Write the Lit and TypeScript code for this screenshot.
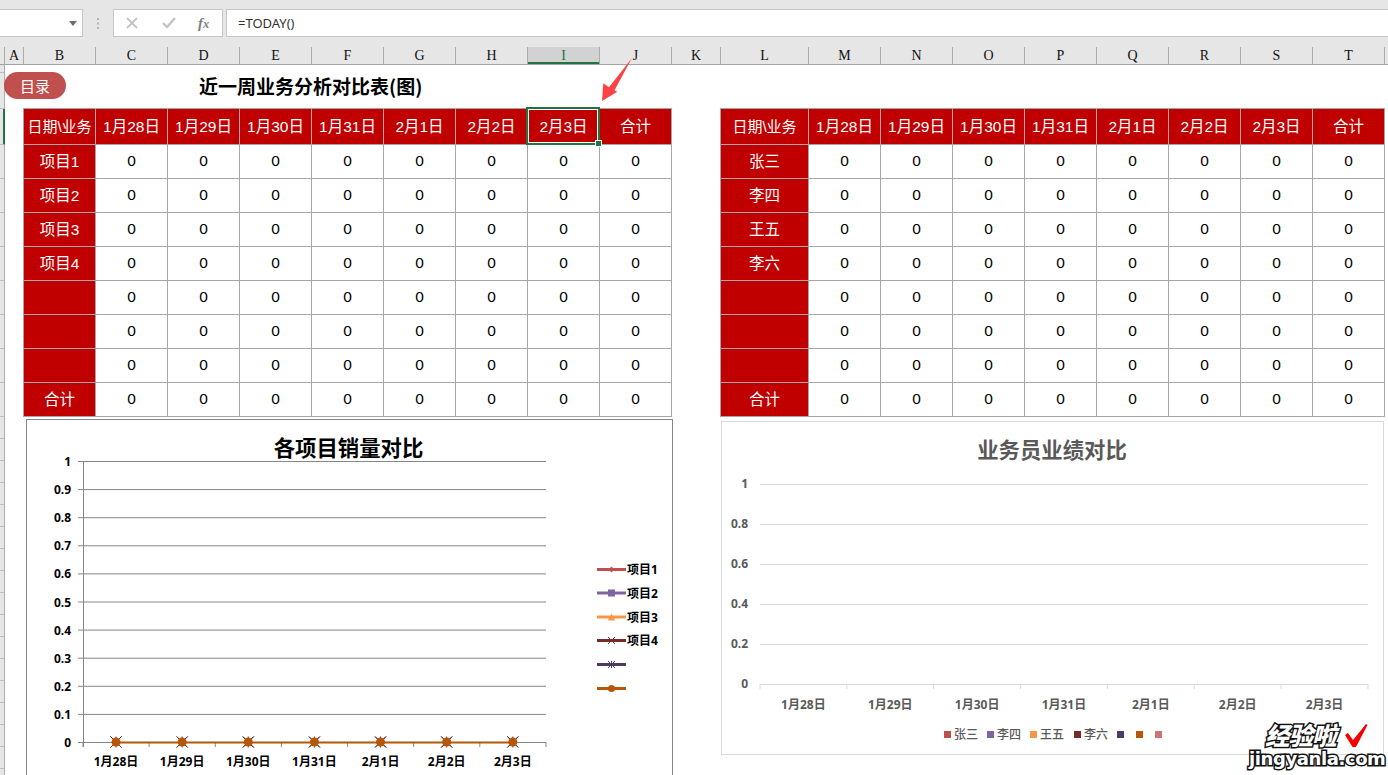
import { LitElement, html, svg, css } from "lit";
import { customElement } from "lit/decorators.js";

const dates = ["1月28日", "1月29日", "1月30日", "1月31日", "2月1日", "2月2日", "2月3日"];
const colLetters: [string, number][] = [
  ["A", 19], ["B", 72], ["C", 72], ["D", 72], ["E", 72], ["F", 72], ["G", 72], ["H", 72], ["I", 72], ["J", 72],
  ["K", 49], ["L", 88], ["M", 72], ["N", 72], ["O", 72], ["P", 72], ["Q", 72], ["R", 72], ["S", 72], ["T", 72],
];
const rowHeights = [8, 36, 36, ...Array(8).fill(34), ...Array(17).fill(22)];

const C1 = ["#c0504d", "#8064a2", "#f79646", "#772c2a", "#4d3b62", "#b65708"];
const C2 = ["#c0504d", "#8064a2", "#f79646", "#772c2a", "#4d3b62", "#b65708", "#cd7371"];

@customElement("app-root")
export class AppRoot extends LitElement {
  static styles = css`
    :host { display: block; width: 1388px; height: 775px; overflow: hidden; position: relative; background: #fff;
      font-family: "Liberation Sans", "Noto Sans CJK SC", sans-serif; }
    .formula { display: flex; height: 37px; box-sizing: border-box; padding-top: 9px; background: #e6e6e6; align-items: stretch; }
    .box { background: #fff; border: 1px solid #c6c6c6; box-sizing: border-box; display: flex; align-items: center; }
    .name { width: 83px; border-left: 0; justify-content: flex-end; padding-right: 5px; }
    .dots { width: 30px; display: flex; align-items: center; justify-content: center; }
    .tools { width: 110px; margin-right: 3px; padding-left: 12px; }
    .tools svg:first-child { margin-right: 24px; }
    .tools svg + svg { margin-right: 22px; }
    .fx { font-family: "Liberation Serif", serif; font-style: italic; font-weight: 700; font-size: 15px; color: #7f7f7f; }
    .input { flex: 1; border-right: 0; padding-left: 11px; font-family: "Noto Sans", sans-serif; font-size: 13px; color: #333; }

    .cols { display: flex; height: 28px; box-sizing: border-box; background: #e6e6e6; border-bottom: 1px solid #a3a3a3; align-items: flex-end; }
    .corner { width: 5px; height: 17px; box-sizing: border-box; border-right: 1px solid #ababab; flex: none; }
    .col { height: 17px; box-sizing: border-box; border-right: 1px solid #ababab; flex: none; display: flex; align-items: center; justify-content: center;
      font-family: "Liberation Serif", serif; font-size: 14px; color: #111; }
    .col.on { background: #d2d2d2; color: #217346; box-shadow: inset 0 -2px 0 #217346; }

    .sheet { display: flex; }
    .strip { width: 5px; flex: none; background: #e6e6e6; height: 710px; overflow: hidden; }
    .r { box-sizing: border-box; border-bottom: 1px solid #bdbdbd; border-right: 1px solid #ababab; }
    .r.on { border-right-color: #217346; box-shadow: inset -1px 0 0 #217346; }
    .main { flex: 1; min-width: 0; }

    .titleRow { height: 43px; display: flex; align-items: flex-start; }
    .btn { width: 62px; height: 27px; margin-top: 7px; margin-left: -1px; border-radius: 14px; background: #c0504d; color: #fff; font-size: 15px;
      display: flex; align-items: center; justify-content: center; font-family: "Noto Sans CJK SC", sans-serif; }
    .title { margin-left: 133px; margin-top: 7px; line-height: 28px; font-family: "Noto Sans CJK SC", sans-serif; font-weight: 700; font-size: 19px; color: #000; white-space: nowrap; }

    .tables { display: flex; padding-left: 18px; gap: 48px; }
    .grid { display: grid; border-top: 1px solid #a6a6a6; border-left: 1px solid #a6a6a6; grid-auto-rows: 34px; flex: none; }
    .a { grid-template-columns: repeat(9, 72px); grid-template-rows: 36px; }
    .b { grid-template-columns: 88px repeat(8, 72px); grid-template-rows: 36px; }
    .c { box-sizing: border-box; border-right: 1px solid #a6a6a6; border-bottom: 1px solid #a6a6a6; display: flex; align-items: center; justify-content: center;
      font-size: 15.5px; color: #000; font-family: "Liberation Sans", "Noto Sans CJK SC", sans-serif; position: relative; padding-bottom: 1px; white-space: nowrap; }
    .c.red { background: #c00000; color: #fff; padding-bottom: 3px; }
    .c.lead { font-size: 15px; }
    .sel { position: absolute; top: -2px; left: -2px; right: -1px; bottom: -1px; border: 2px solid #217346; box-shadow: inset 0 0 0 1px #fff; z-index: 1; }
    .handle { position: absolute; right: -3px; bottom: -3px; width: 5px; height: 5px; background: #217346; border: 1px solid #fff; z-index: 2; }

    .charts { display: flex; align-items: flex-start; padding-left: 21px; gap: 48px; padding-top: 2px; }
    .chart { display: block; flex: none; box-sizing: border-box; background: #fff; }
    .c1 { width: 647px; height: 360px; border: 1px solid #868686; }
    .c2 { width: 663px; height: 334px; border: 1px solid #d9d9d9; margin-top: 2px; }
    text { font-family: "Noto Sans CJK SC", sans-serif; }
    .t1 { font-size: 21.4px; font-weight: 700; fill: #000; text-anchor: middle; }
    .t2 { font-size: 21.4px; font-weight: 700; fill: #595959; text-anchor: middle; }
    .yl { font-family: "Noto Sans", sans-serif; font-size: 12px; font-weight: 700; fill: #000; text-anchor: end; }
    .xl { font-family: "Noto Sans", "Noto Sans CJK SC", sans-serif; font-size: 12px; font-weight: 700; fill: #000; text-anchor: middle; }
    .lg { font-family: "Noto Sans", "Noto Sans CJK SC", sans-serif; font-size: 12px; font-weight: 700; fill: #000; }
    .g { fill: #595959; }
    .lg2 { font-size: 12px; font-weight: 500; fill: #595959; }

    .arrow { position: absolute; left: 595px; top: 50px; }
    .wm { position: absolute; left: 1249px; top: 722px; width: 130px; height: 50px; }
    .wm1 { position: absolute; left: 16px; top: 0; font-family: "Noto Sans CJK SC", sans-serif; font-weight: 900; font-style: italic; font-size: 24.5px; letter-spacing: -1px; color: #fff;
      -webkit-text-stroke: 3px #111; paint-order: stroke fill; white-space: nowrap; line-height: 26px; }
    .wm2 { position: absolute; left: 0; top: 26px; font-family: "DejaVu Sans", sans-serif; font-weight: 700; font-size: 18px; letter-spacing: -0.4px; color: #fff;
      -webkit-text-stroke: 3px #111; paint-order: stroke fill; white-space: nowrap; line-height: 22px; }
    .wmc { position: absolute; left: 94px; top: 0; }
  `;

  private formula() {
    return html`<div class="formula">
      <div class="box name"><svg width="8" height="5"><path d="M0 0h8L4 5z" fill="#6e6e6e"/></svg></div>
      <div class="dots"><svg width="3" height="11"><path d="M0 0h2v2H0zM0 4.5h2v2H0zM0 9h2v2H0z" fill="#b4b4b4"/></svg></div>
      <div class="box tools">
        <svg width="12" height="12"><path d="M1 1l10 10M11 1L1 11" stroke="#c4c4c4" stroke-width="1.8" fill="none"/></svg>
        <svg width="14" height="12"><path d="M1 6l4 4 8-9" stroke="#c4c4c4" stroke-width="2.4" fill="none"/></svg>
        <span class="fx">f<small>x</small></span>
      </div>
      <div class="box input">=TODAY()</div>
    </div>`;
  }

  private cols() {
    return html`<div class="cols">
      <div class="corner"></div>
      ${colLetters.map(([l, w]) => html`<div class="col ${l === "I" ? "on" : ""}" style="width:${w}px">${l}</div>`)}
    </div>`;
  }

  private table(cls: string, names: string[], selected: boolean) {
    return html`<div class="grid ${cls}">
      <div class="c red lead">日期\\业务</div>
      ${dates.map((d, i) => html`<div class="c red">${d}${selected && i === 6 ? html`<span class="sel"></span><span class="handle"></span>` : ""}</div>`)}
      <div class="c red">合计</div>
      ${[...names, "", "", "", "合计"].map((n) => html`
        <div class="c red">${n}</div>
        ${Array(8).fill(0).map(() => html`<div class="c">0</div>`)}
      `)}
    </div>`;
  }

  private marker(i: number, x: number, y: number, s: number) {
    const c = C1[i];
    if (i === 0) return svg`<path d="M${x} ${y - s}l${s} ${s}l${-s} ${s}l${-s} ${-s}z" fill="${c}"/>`;
    if (i === 1) return svg`<rect x="${x - s}" y="${y - s}" width="${2 * s}" height="${2 * s}" fill="${c}"/>`;
    if (i === 2) return svg`<path d="M${x} ${y - s}l${s} ${2 * s}h${-2 * s}z" fill="${c}"/>`;
    if (i === 3) return svg`<path d="M${x - s} ${y - s}l${2 * s} ${2 * s}M${x + s} ${y - s}l${-2 * s} ${2 * s}" stroke="${c}" stroke-width="1" fill="none"/>`;
    if (i === 4) return svg`<path d="M${x - s} ${y - s}l${2 * s} ${2 * s}M${x + s} ${y - s}l${-2 * s} ${2 * s}M${x} ${y - s}v${2 * s}" stroke="${c}" stroke-width="1" fill="none"/>`;
    return svg`<circle cx="${x}" cy="${y}" r="${s}" fill="${c}"/>`;
  }

  private chart1() {
    const ys = Array.from({ length: 11 }, (_, i) => 461.5 + i * 28.1);
    const labels = ["1", "0.9", "0.8", "0.7", "0.6", "0.5", "0.4", "0.3", "0.2", "0.1", "0"];
    const xs = Array.from({ length: 8 }, (_, i) => 83 + i * 66.14);
    const centers = dates.map((_, i) => 116 + i * 66.14);
    const legendY = [569.5, 593, 617, 640.5, 664.5, 688.5];
    const names = ["项目1", "项目2", "项目3", "项目4", "", ""];
    return html`<svg class="chart c1" viewBox="27 420 645 358" width="647" height="360">
      <text class="t1" x="348.5" y="456">各项目销量对比</text>
      ${ys.map((y, i) => svg`
        <line x1="78" x2="546" y1="${y}" y2="${y}" stroke="#868686"/>
        <text class="yl" x="71" y="${y + 4.5}">${labels[i]}</text>`)}
      <line x1="83.5" x2="83.5" y1="461" y2="747" stroke="#868686"/>
      ${xs.map((x) => svg`<line x1="${x}" x2="${x}" y1="742" y2="747" stroke="#868686"/>`)}
      ${dates.map((d, i) => svg`<text class="xl" x="${centers[i]}" y="766">${d}</text>`)}
      ${[4, 3].map((s) => centers.map((x) => this.marker(s, x, 742, 5.5)))}
      <line x1="${centers[0]}" x2="${centers[6]}" y1="742.5" y2="742.5" stroke="#b65708" stroke-width="2"/>
      ${centers.map((x) => this.marker(5, x, 742, 4.5))}
      ${legendY.map((y, i) => svg`
        <line x1="597" x2="626" y1="${y}" y2="${y}" stroke="${C1[i]}" stroke-width="3"/>
        ${this.marker(i, 611.5, y, i === 0 ? 3 : 3.5)}
        <text class="lg" x="627" y="${y + 4.5}">${names[i]}</text>`)}
    </svg>`;
  }

  private chart2() {
    const labels = ["1", "0.8", "0.6", "0.4", "0.2", "0"];
    const ys = labels.map((_, i) => 484.5 + i * 40);
    const xs = Array.from({ length: 8 }, (_, i) => 760 + i * 86.85);
    const legend: [number, string][] = [[944, "张三"], [987, "李四"], [1030, "王五"], [1074, "李六"], [1117, ""], [1136, ""], [1155, ""]];
    return html`<svg class="chart c2" viewBox="722 422 661 332" width="663" height="334">
      <text class="t2" x="1052" y="458">业务员业绩对比</text>
      ${ys.map((y, i) => svg`
        <line x1="760" x2="1368" y1="${y}" y2="${y}" stroke="#d9d9d9"/>
        <text class="yl g" x="748" y="${y + 3.5}">${labels[i]}</text>`)}
      ${xs.map((x) => svg`<line x1="${x}" x2="${x}" y1="684" y2="689" stroke="#d9d9d9"/>`)}
      ${dates.map((d, i) => svg`<text class="xl g" x="${803.4 + i * 86.85}" y="709">${d}</text>`)}
      ${legend.map(([x, n], i) => svg`
        <rect x="${x}" y="731" width="7" height="7" fill="${C2[i]}"/>
        <text class="lg2" x="${x + 10}" y="738.5">${n}</text>`)}
    </svg>`;
  }

  render() {
    return html`
      ${this.formula()}
      ${this.cols()}
      <div class="sheet">
        <div class="strip">${rowHeights.map((h, i) => html`<div class="r ${i === 2 ? "on" : ""}" style="height:${h}px"></div>`)}</div>
        <div class="main">
          <div class="titleRow"><div class="btn">目录</div><div class="title">近一周业务分析对比表(图)</div></div>
          <div class="tables">
            ${this.table("a", ["项目1", "项目2", "项目3", "项目4"], true)}
            ${this.table("b", ["张三", "李四", "王五", "李六"], false)}
          </div>
          <div class="charts">${this.chart1()}${this.chart2()}</div>
        </div>
      </div>
      <svg class="arrow" width="45" height="60" viewBox="595 50 45 60">
        <path d="M602 101L603.3 83.3L609 87.3L632 58L614.5 90.3L617.3 91.7Z" fill="#fb4343"/>
      </svg>
      <div class="wm">
        <span class="wm1">经验啦</span>
        <svg class="wmc" width="26" height="28" viewBox="0 0 26 28"><path d="M2 13L5 11L10 18L23 2L24.5 3L13 25H9.5Z" fill="#f40000"/></svg>
        <span class="wm2">jingyanla.com</span>
      </div>
    `;
  }
}
